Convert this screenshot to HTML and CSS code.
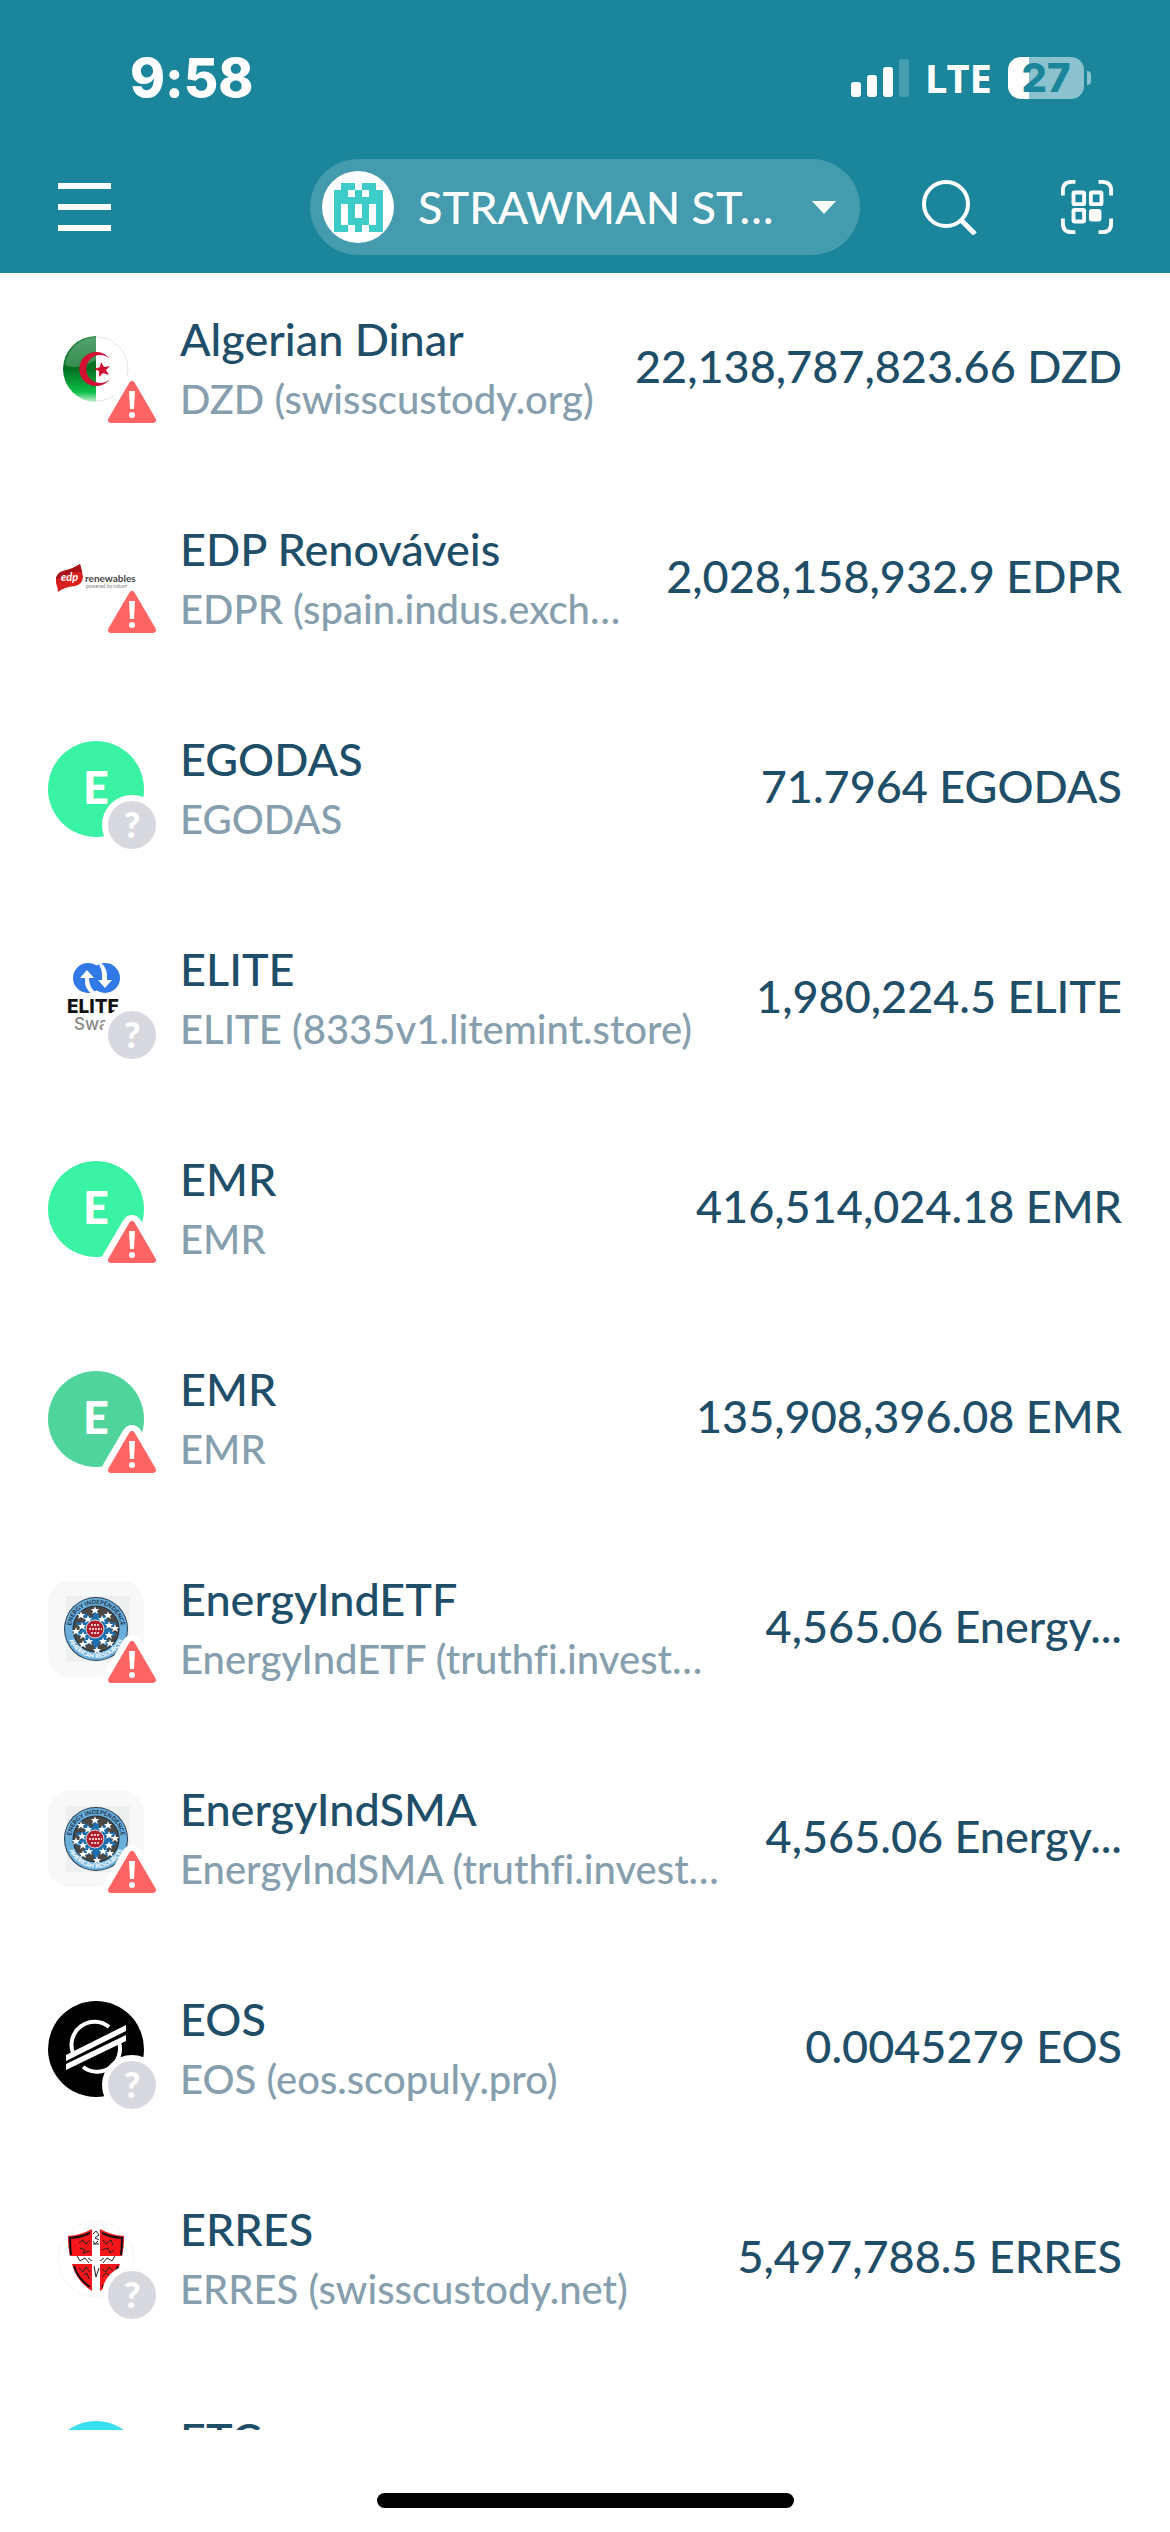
FILE: index.html
```html
<!DOCTYPE html>
<html lang="en">
<head>
<meta charset="utf-8">
<meta name="viewport" content="width=device-width, initial-scale=1">
<title>Wallet assets</title>
<link rel="stylesheet" href="styles.css">
</head>
<body>
<svg class="defs" aria-hidden="true">
  <symbol id="warning" viewBox="0 0 60 60">
    <path d="M30 10 50 44H10Z" fill="#fff" stroke="#fff" stroke-width="20" stroke-linejoin="round"/>
    <path d="M30 9 51 45H9Z" fill="#ff6464" stroke="#ff6464" stroke-width="6" stroke-linejoin="round"/>
    <path d="M27 16h6l-1 18h-4Z" fill="#fff"/>
    <circle cx="30" cy="40" r="3" fill="#fff"/>
  </symbol>
  <symbol id="energy" viewBox="0 0 96 96">
    <path d="M18 15h64v66H18Z" fill="#eeefef"/>
    <circle cx="48" cy="48" r="32" fill="#24394a"/>
    <circle cx="48" cy="48" r="27" fill="none" stroke="#6aaedc" stroke-width="8"/>
    <circle cx="48" cy="48" r="23" fill="#4b4745" stroke="#1d2c38" stroke-width="1"/>
    <path id="ring-top" d="M23 48a25 25 0 0 1 50 0" fill="none"/>
    <path id="ring-bottom" d="M19 48a29 29 0 0 0 58 0" fill="none"/>
    <text class="ring-text"><textPath href="#ring-top" startOffset="50%" text-anchor="middle">ENERGY INDEPENDENCE</textPath></text>
    <text class="ring-text ring-light"><textPath href="#ring-bottom" startOffset="50%" text-anchor="middle">AMERICAN RESOURCES</textPath></text>
    <path d="m48 27 4 10 9-6-2 10 10 1-7 6 7 6-10 2 2 10-9-5-4 9-4-9-9 5 2-10-10-2 7-6-7-6 10-1-2-10 9 6Z" fill="#1c6fae"/>
    <g fill="#fff">
      <path id="st" d="m47 25 1 3h3l-2 2 1 3-3-2-3 2 1-3-2-2h3Z"/>
      <use href="#st" x="13" y="5"/><use href="#st" x="20" y="18"/><use href="#st" x="15" y="33"/><use href="#st" x="2" y="40"/>
      <use href="#st" x="-12" y="34"/><use href="#st" x="-19" y="21"/><use href="#st" x="-14" y="5"/>
      <use href="#st" x="7" y="9"/><use href="#st" x="-7" y="9"/><use href="#st" x="-13" y="16"/><use href="#st" x="-12" y="25"/>
      <use href="#st" x="14" y="15"/><use href="#st" x="14" y="25"/><use href="#st" x="-6" y="31"/><use href="#st" x="8" y="31"/>
    </g>
    <circle cx="47" cy="48" r="9" fill="#b01d2c" stroke="#ddd" stroke-width="1"/>
    <path d="M43 44h9M41 48h13M43 52h9" stroke="#f3c6c6" stroke-width="2" stroke-dasharray="2 1"/>
  </symbol>
</svg>

<div class="app">
  <header class="top">
    <div class="status">
      <span class="clock">9:58</span>
      <div class="status-right">
        <svg class="signal" viewBox="0 0 58 38" aria-hidden="true" fill="#fff">
          <rect y="23" width="10" height="15" rx="3"/>
          <rect x="16" y="16" width="10" height="22" rx="3"/>
          <rect x="32" y="8" width="10" height="30" rx="3"/>
          <rect x="48" width="10" height="38" rx="3" opacity=".2"/>
        </svg>
        <span class="net">LTE</span>
        <div class="battery"><span class="level">27</span><span class="nub"></span></div>
      </div>
    </div>
    <nav class="bar">
      <button class="icon-btn" aria-label="Menu">
        <svg class="menu-icon" viewBox="0 0 53 50"><path d="M0 4h53M0 25h53M0 46h53" stroke="#fff" stroke-width="6"/></svg>
      </button>
      <button class="account">
        <svg class="avatar" viewBox="0 0 72 72" aria-hidden="true">
          <circle cx="36" cy="36" r="36" fill="#fff"/>
          <g transform="translate(12 12)" fill="#3eccc9" shape-rendering="crispEdges">
            <path d="M7 0h14v7H7ZM28 0h14v7H28ZM0 7h14v7H0ZM21 7h7v7h-7ZM35 7h14v7H35ZM0 14h49v7H0ZM0 21h7v28H0ZM42 21h7v28h-7ZM14 21h7v21h-7ZM28 21h7v21h-7ZM21 35h7v14h-7ZM7 42h7v7H7ZM35 42h7v7h-7Z"/>
          </g>
        </svg>
        <span class="account-name">STRAWMAN ST…</span>
        <svg class="caret" viewBox="0 0 24 13" aria-hidden="true"><path d="M0 0h24L12 13Z" fill="#fff"/></svg>
      </button>
      <button class="icon-btn" aria-label="Search">
        <svg class="search-icon" viewBox="0 0 56 56" fill="none" stroke="#fff"><circle cx="24" cy="25" r="22" stroke-width="4"/><path d="m39 41 14 14" stroke-width="5"/></svg>
      </button>
      <button class="icon-btn scan" aria-label="Scan code">
        <svg class="scan-icon" viewBox="0 0 54 56" fill="none" stroke="#fff" stroke-width="4">
          <path d="M2 16v-5q0-9 9-9h4M39 2h4q9 0 9 9v5M52 40v5q0 9-9 9h-4M15 54h-4q-9 0-9-9v-5"/>
          <rect x="13" y="13" width="11" height="12" rx="1"/><rect x="31" y="13" width="11" height="12" rx="1"/><rect x="13" y="31" width="11" height="12" rx="1"/>
          <rect x="31" y="32" width="9" height="9" rx="1" fill="#fff"/>
        </svg>
      </button>
    </nav>
  </header>

  <main class="list-wrap">
    <ul class="list">
      <li class="row">
        <div class="logo">
          <svg viewBox="0 0 96 96" aria-hidden="true">
            <defs>
              <linearGradient id="g1" x1="0" y1="0" x2="0" y2="1"><stop offset="0" stop-color="#2c8a4a"/><stop offset=".5" stop-color="#00701f"/><stop offset=".85" stop-color="#0dc04a"/><stop offset="1" stop-color="#c8f0d2"/></linearGradient>
            </defs>
            <circle cx="48" cy="48" r="32" fill="#fff" stroke="#e6e6e6" stroke-width="1"/>
            <path d="M48 15a33 33 0 0 0 0 66Z" fill="url(#g1)"/>
            <path d="M48 16a32 32 0 0 0-31 28q10 6 31-5Z" fill="#fff" opacity=".2"/>
            <path d="M62 38a17 17 0 1 0 0 20a14 14 0 1 1 0-20Z" fill="#d21034"/>
            <path d="m53 41 3 5 6-1-4 4 3 5-6-2-4 4v-6l-5-2 6-2Z" fill="#d21034"/>
          </svg>
          <svg class="warn" role="img" aria-label="Warning"><use href="#warning"/></svg>
        </div>
        <div class="info"><div class="name">Algerian Dinar</div><div class="sub">DZD (swisscustody.org)</div></div>
        <div class="amount">22,138,787,823.66 DZD</div>
      </li>
      <li class="row">
        <div class="logo">
          <svg viewBox="0 0 96 96" aria-hidden="true">
            <path d="M32 33q2 7 3 13-1 8-8 9-11 1-17 6 0-4-2-9-1-9 7-12 10-2 17-7Z" fill="#d8201f"/>
            <path d="M32 33q1 4 2 8-12 0-26 8 0-7 7-9 10-2 17-7Z" fill="#a81218"/>
            <text x="13" y="50" class="edp">edp</text>
            <text x="37" y="51" class="renew">renewables</text>
            <text x="38" y="57" class="powered">powered by nature</text>
          </svg>
          <svg class="warn" role="img" aria-label="Warning"><use href="#warning"/></svg>
        </div>
        <div class="info"><div class="name">EDP Renováveis</div><div class="sub">EDPR (spain.indus.exch…</div></div>
        <div class="amount">2,028,158,932.9 EDPR</div>
      </li>
      <li class="row">
        <div class="logo letter green">E<span class="unknown">?</span></div>
        <div class="info"><div class="name">EGODAS</div><div class="sub">EGODAS</div></div>
        <div class="amount">71.7964 EGODAS</div>
      </li>
      <li class="row">
        <div class="logo">
          <svg viewBox="0 0 96 96" aria-hidden="true">
            <circle cx="40" cy="27" r="15" fill="#3079e6"/>
            <circle cx="57" cy="27" r="15" fill="#3079e6"/>
            <path d="M45 43q-9-4-8-16h-5l7-8 7 8h-5q0 9 6 14Z" fill="#fff"/>
            <path d="M49 11q6 6 5 18h-4l7 8 7-8h-5Q60 17 53 12Z" fill="#fff"/>
            <text x="19" y="62" class="elite">ELITE</text>
            <text x="26" y="79" class="swap">Swap</text>
          </svg>
          <span class="unknown">?</span>
        </div>
        <div class="info"><div class="name">ELITE</div><div class="sub">ELITE (8335v1.litemint.store)</div></div>
        <div class="amount">1,980,224.5 ELITE</div>
      </li>
      <li class="row">
        <div class="logo letter green">E<svg class="warn" role="img" aria-label="Warning"><use href="#warning"/></svg></div>
        <div class="info"><div class="name">EMR</div><div class="sub">EMR</div></div>
        <div class="amount">416,514,024.18 EMR</div>
      </li>
      <li class="row">
        <div class="logo letter sea">E<svg class="warn" role="img" aria-label="Warning"><use href="#warning"/></svg></div>
        <div class="info"><div class="name">EMR</div><div class="sub">EMR</div></div>
        <div class="amount">135,908,396.08 EMR</div>
      </li>
      <li class="row">
        <div class="logo tile"><svg viewBox="0 0 96 96" aria-hidden="true"><use href="#energy"/></svg><svg class="warn" role="img" aria-label="Warning"><use href="#warning"/></svg></div>
        <div class="info"><div class="name">EnergyIndETF</div><div class="sub">EnergyIndETF (truthfi.invest…</div></div>
        <div class="amount">4,565.06 Energy...</div>
      </li>
      <li class="row">
        <div class="logo tile"><svg viewBox="0 0 96 96" aria-hidden="true"><use href="#energy"/></svg><svg class="warn" role="img" aria-label="Warning"><use href="#warning"/></svg></div>
        <div class="info"><div class="name">EnergyIndSMA</div><div class="sub">EnergyIndSMA (truthfi.invest…</div></div>
        <div class="amount">4,565.06 Energy...</div>
      </li>
      <li class="row">
        <div class="logo">
          <svg viewBox="0 0 96 96" aria-hidden="true">
            <circle cx="48" cy="48" r="48"/>
            <g fill="none" stroke="#fff" stroke-width="4">
              <path d="M25 52A23 23 0 0 1 61 26"/><path d="M35 66A23 23 0 0 0 71 41"/>
            </g>
            <path d="M18 54 78 24v6L18 60ZM18 63 78 34v6L18 69Z" fill="#fff"/>
          </svg>
          <span class="unknown">?</span>
        </div>
        <div class="info"><div class="name">EOS</div><div class="sub">EOS (eos.scopuly.pro)</div></div>
        <div class="amount">0.0045279 EOS</div>
      </li>
      <li class="row">
        <div class="logo">
          <svg viewBox="0 0 96 96" aria-hidden="true">
            <circle cx="48" cy="48" r="38" fill="none" stroke="#f6f6f6"/>
            <path d="M20 25q13-1 24-7v27H22q-2-8-2-20ZM76 25q-13-1-24-7v27h22q2-8 2-20ZM24 53h20v27Q28 70 24 53ZM72 53H52v27q16-10 20-27Z" fill="#f5161b"/>
            <path d="M23 44q-1-9-1-17 12-1 20-5M73 44q1-9 1-17-12-1-20-5M26 55q4 13 16 21M70 55q-4 13-16 21" fill="none" stroke="#111" stroke-width="2"/>
            <path d="m31 32 4-3 3 4 4-4M32 37l5 2-2 3 7-2M55 29l3 4 5-4 2 5M54 39l6-2 2 5 4-3M31 57l4 4 3-5 4 5M36 64l3-2 2 6M54 58l4 3 3-5 4 4M54 66l4-4 4 3M29 45l3 5 5-3 4 5M67 45l-3 5-5-3-4 5M45 23l3-3 3 4-4 3 4 2M45 33h6M46 55l2 11 3-9M45 30l2 3 3-3M40 47l4 3M52 50l4-3" fill="none" stroke="#222" stroke-width="1"/>
          </svg>
          <span class="unknown">?</span>
        </div>
        <div class="info"><div class="name">ERRES</div><div class="sub">ERRES (swisscustody.net)</div></div>
        <div class="amount">5,497,788.5 ERRES</div>
      </li>
      <li class="row">
        <div class="logo letter cyan">E</div>
        <div class="info"><div class="name">ETC</div><div class="sub">ETC</div></div>
      </li>
    </ul>
  </main>
  <footer class="home"><span class="home-bar"></span></footer>
</div>
</body>
</html>
```
FILE: styles.css
```css
* { box-sizing: border-box; }

body {
  margin: 0;
  background: #fff;
  color: #1f4e69;
  font-family: Lato, "Open Sans", sans-serif;
  font-weight: 500;
  font-variant-ligatures: none;
}

button {
  border: 0;
  padding: 0;
  background: none;
  color: inherit;
  font: inherit;
}

svg { display: block; }
.defs { position: absolute; width: 0; height: 0; }

.app {
  display: grid;
  grid-template-rows: auto 1fr auto;
  height: 100vh;
}

/* Header */
.top {
  background: #1a859b;
  color: #fff;
  padding-bottom: 18px;
}

.status {
  display: flex;
  justify-content: space-between;
  align-items: center;
  height: 156px;
  padding: 0 86px 0 130px;
  font-family: Inter, sans-serif;
}

.clock { font-size: 53px; font-weight: 800; }

.status-right {
  display: flex;
  align-items: center;
  gap: 16px;
}

.signal { width: 58px; height: 38px; }
.net { font-family: "Noto Sans", sans-serif; font-size: 40px; line-height: 40px; font-weight: 700; }

.battery {
  position: relative;
  display: flex;
  align-items: center;
  justify-content: center;
  width: 76px;
  height: 42px;
  border-radius: 13px;
  background: linear-gradient(90deg, #fff 27%, #8cc2cd 27%);
  color: #1a859b;
}

.level { font-size: 40px; line-height: 42px; font-weight: 800; }

.nub {
  position: absolute;
  right: -7px;
  top: 14px;
  width: 4px;
  height: 14px;
  border-radius: 0 4px 4px 0;
  background: #8cc2cd;
}

.bar {
  display: flex;
  align-items: center;
  padding: 3px 56px 0 58px;
}

.icon-btn { display: flex; }
.menu-icon { width: 53px; height: 50px; }
.search-icon { width: 56px; height: 56px; }
.scan-icon { width: 54px; height: 54px; }
.scan { margin-left: 82px; }

.account {
  display: flex;
  align-items: center;
  width: 550px;
  height: 96px;
  margin: 0 62px 0 auto;
  padding: 0 24px 0 12px;
  border-radius: 48px;
  background: #459bae;
  font-size: 45px;
}

.avatar { width: 72px; height: 72px; }
.account-name { flex: 1; margin-left: 24px; text-align: left; }
.caret { width: 24px; height: 13px; }

/* Asset list */
.list-wrap { overflow: hidden; }
.list { margin: 0; padding: 0; list-style: none; }

.row {
  display: flex;
  align-items: center;
  height: 210px;
  padding: 36px 48px 54px;
}

.logo {
  position: relative;
  flex: none;
  width: 96px;
  height: 96px;
}

.letter {
  border-radius: 50%;
  color: #fff;
  font-size: 45px;
  line-height: 92px;
  font-weight: 900;
  text-align: center;
}

.green { background: #3af2a3; }
.sea { background: #4fd49b; }
.cyan { background: #38dff0; }
.tile { border-radius: 21px; background: #f8f8f8; }

.warn {
  position: absolute;
  left: 54px;
  top: 54px;
  width: 60px;
  height: 60px;
}

.unknown {
  position: absolute;
  left: 54px;
  top: 54px;
  width: 60px;
  height: 60px;
  border: 6px solid #fff;
  border-radius: 50%;
  background: #d8d9df;
  color: #fff;
  font-size: 36px;
  line-height: 46px;
  font-weight: 900;
  text-align: center;
}

.info {
  flex: 1;
  min-width: 0;
  margin-left: 36px;
  line-height: 60px;
  white-space: nowrap;
}

.name { font-size: 45px; }
.sub { color: #869fae; font-size: 40px; }

.amount {
  flex: none;
  padding-bottom: 6px;
  font-size: 45px;
  line-height: 60px;
  white-space: nowrap;
}

/* Lettering inside the token logos */
.edp { fill: #fff; font-size: 11px; font-weight: 700; font-style: italic; }
.renew { fill: #444; font-size: 10px; font-weight: 700; }
.powered { fill: #888; font-size: 5px; }
.elite { fill: #111; font-family: Inter, sans-serif; font-size: 19px; font-weight: 800; }
.swap { fill: #888; font-family: Inter, sans-serif; font-size: 17px; font-weight: 500; }
.ring-text { fill: #1d3850; font-size: 6px; font-weight: 900; }
.ring-light { fill: #fff; }

/* Home indicator */
.home {
  display: flex;
  justify-content: center;
  height: 102px;
  padding-top: 63px;
}

.home-bar {
  width: 417px;
  height: 15px;
  border-radius: 8px;
  background: #000;
}
```
